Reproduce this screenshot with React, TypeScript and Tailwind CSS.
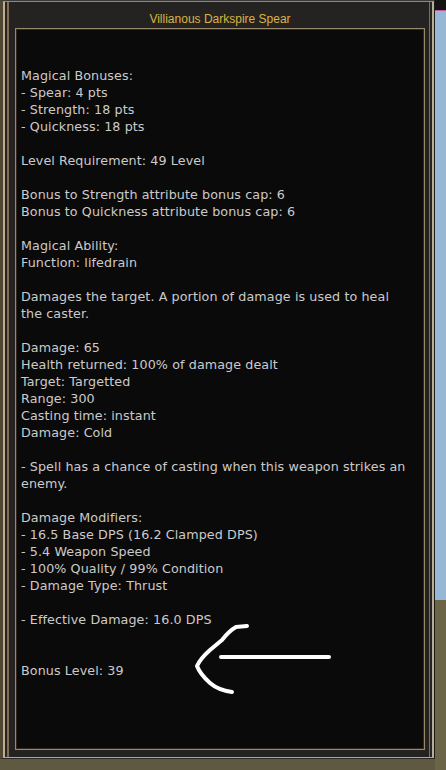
const LINES = [
  'Magical Bonuses:',
  '- Spear: 4 pts',
  '- Strength: 18 pts',
  '- Quickness: 18 pts',
  '',
  'Level Requirement: 49 Level',
  '',
  'Bonus to Strength attribute bonus cap: 6',
  'Bonus to Quickness attribute bonus cap: 6',
  '',
  'Magical Ability:',
  'Function: lifedrain',
  '',
  'Damages the target. A portion of damage is used to heal',
  'the caster.',
  '',
  'Damage: 65',
  'Health returned: 100% of damage dealt',
  'Target: Targetted',
  'Range: 300',
  'Casting time: instant',
  'Damage: Cold',
  '',
  '- Spell has a chance of casting when this weapon strikes an',
  'enemy.',
  '',
  'Damage Modifiers:',
  '- 16.5 Base DPS (16.2 Clamped DPS)',
  '- 5.4 Weapon Speed',
  '- 100% Quality / 99% Condition',
  '- Damage Type: Thrust',
  '',
  '- Effective Damage: 16.0 DPS',
  '',
  '',
  'Bonus Level: 39',
]

// hand drawn arrow scribbled over the screenshot
function Arrow() {
  return (
    <svg
      className="absolute inset-0 pointer-events-none"
      width="446"
      height="770"
      viewBox="0 0 446 770"
    >
      <g fill="none" stroke="#ffffff" strokeWidth="4" strokeLinecap="round" strokeLinejoin="round">
        <path d="M247 626 L236 627 Q229 631 222 640 L210 650 Q200 659 197 666 Q200 674 210 683 Q218 690 232 692" />
        <path d="M221 657 L329 657" />
      </g>
    </svg>
  )
}

export default function App() {
  return (
    <div
      className="relative flex w-[446px] h-[770px] overflow-hidden bg-[#5f5a41]"
      style={{ fontFamily: '"DejaVu Sans", Verdana, sans-serif' }}
    >
      {/* tooltip window */}
      <div className="flex flex-col w-[435px]">
        <div className="h-[759px] border-l-[3px] border-t border-r border-b border-l-[#514733] border-t-[#3a3a38] border-r-[#1e1c1a] border-b-[#2a2826]">
          <div className="h-full border-l-2 border-t border-r-2 border-b border-l-[#b8af96] border-t-[#8a8884] border-r-[#b5ad96] border-b-[#a9a7a0]">
            <div className="h-full border-l-2 border-r-2 border-l-[#2d231b] border-r-[#2a2420]">
              <div className="h-full border-l-2 border-r border-l-[#7f6f56] border-r-[#7f6f56]">
                <div className="flex flex-col h-full bg-[#252321] pl-[6px] pr-[4px] pb-[7px]">
                  <div
                    className="h-[26px] pt-[10px] text-center text-[12px] leading-[14px] text-[#d9b444] whitespace-nowrap"
                    style={{ fontFamily: '"Liberation Sans", Arial, sans-serif' }}
                  >
                    Villianous Darkspire Spear
                  </div>
                  <div className="flex-1 border border-[#9a8a6c]">
                    <div className="h-full border border-[#33271e] bg-[#0b0a0a] pl-[4px] pt-[37px]">
                      {LINES.map((line, i) => (
                        <div
                          key={i}
                          className="h-[17px] text-[12.7px] leading-[17px] tracking-[0.1px] text-[#cbcbcb] whitespace-nowrap"
                        >
                          {line}
                        </div>
                      ))}
                    </div>
                  </div>
                </div>
              </div>
            </div>
          </div>
        </div>
        <div className="flex-1 bg-[#5e5940]" />
      </div>

      {/* game world behind the window */}
      <div className="flex flex-col flex-1">
        <div className="h-[10px] bg-[#141312]" />
        <div className="h-px bg-[#c25a9c]" />
        <div className="h-[589px] bg-[#97b7d7]" />
        <div className="flex-1 bg-[#6b6447]" />
      </div>

      <Arrow />
    </div>
  )
}
